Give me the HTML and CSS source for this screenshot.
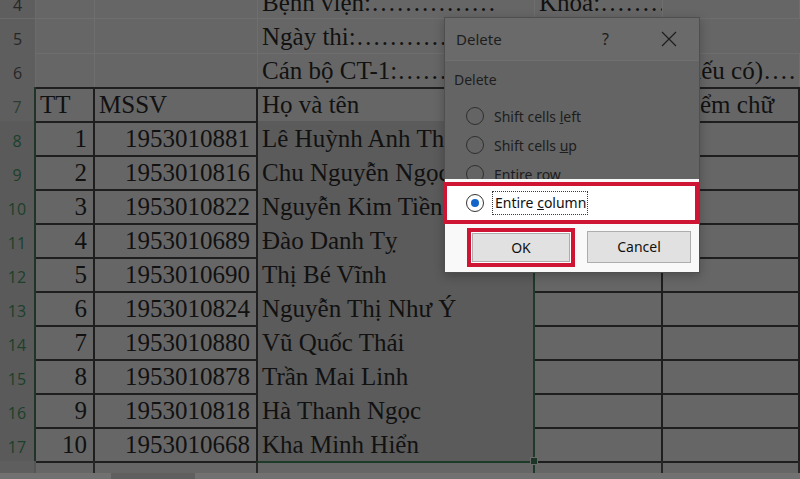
FILE: index.html
```html
<!DOCTYPE html>
<html lang="vi">
<head>
<meta charset="utf-8">
<title>Delete</title>
<link rel="stylesheet" href="styles.css">
</head>
<body>
<div class="sheet">
  <div class="row">
    <div class="rh">4</div><div class="cell"></div><div class="cell"></div>
    <div class="cell clip">Bệnh viện:……………</div><div class="cell clip">Khóa:………</div><div class="cell"></div>
  </div>
  <div class="row">
    <div class="rh">5</div><div class="cell"></div><div class="cell"></div>
    <div class="cell free">Ngày thi:………………………………</div><div class="cell nob"></div><div class="cell nob"></div>
  </div>
  <div class="row r6">
    <div class="rh">6</div><div class="cell"></div><div class="cell"></div>
    <div class="cell clip">Cán bộ CT-1:……………</div><div class="cell free">Cán bộ CT-2: (nếu có)………</div><div class="cell"></div>
  </div>
  <div class="row t">
    <div class="rh top">7</div><div class="cell">TT</div><div class="cell">MSSV</div>
    <div class="cell">Họ và tên</div><div class="cell clip">Điểm số</div><div class="cell ind">Điểm chữ</div>
  </div>
  <div class="row t">
    <div class="rh hl">8</div><div class="cell num">1</div><div class="cell num">1953010881</div>
    <div class="cell sel">Lê Huỳnh Anh Thư</div><div class="cell"></div><div class="cell"></div>
  </div>
  <div class="row t">
    <div class="rh hl">9</div><div class="cell num">2</div><div class="cell num">1953010816</div>
    <div class="cell sel">Chu Nguyễn Ngọc Anh</div><div class="cell"></div><div class="cell"></div>
  </div>
  <div class="row t">
    <div class="rh hl">10</div><div class="cell num">3</div><div class="cell num">1953010822</div>
    <div class="cell sel">Nguyễn Kim Tiền</div><div class="cell"></div><div class="cell"></div>
  </div>
  <div class="row t">
    <div class="rh hl">11</div><div class="cell num">4</div><div class="cell num">1953010689</div>
    <div class="cell sel">Đào Danh Tỵ</div><div class="cell"></div><div class="cell"></div>
  </div>
  <div class="row t">
    <div class="rh hl">12</div><div class="cell num">5</div><div class="cell num">1953010690</div>
    <div class="cell sel">Thị Bé Vĩnh</div><div class="cell"></div><div class="cell"></div>
  </div>
  <div class="row t">
    <div class="rh hl">13</div><div class="cell num">6</div><div class="cell num">1953010824</div>
    <div class="cell sel">Nguyễn Thị Như Ý</div><div class="cell"></div><div class="cell"></div>
  </div>
  <div class="row t">
    <div class="rh hl">14</div><div class="cell num">7</div><div class="cell num">1953010880</div>
    <div class="cell sel">Vũ Quốc Thái</div><div class="cell"></div><div class="cell"></div>
  </div>
  <div class="row t">
    <div class="rh hl">15</div><div class="cell num">8</div><div class="cell num">1953010878</div>
    <div class="cell sel">Trần Mai Linh</div><div class="cell"></div><div class="cell"></div>
  </div>
  <div class="row t">
    <div class="rh hl">16</div><div class="cell num">9</div><div class="cell num">1953010818</div>
    <div class="cell sel">Hà Thanh Ngọc</div><div class="cell"></div><div class="cell"></div>
  </div>
  <div class="row t">
    <div class="rh hl">17</div><div class="cell num">10</div><div class="cell num">1953010668</div>
    <div class="cell sel last">Kha Minh Hiển</div><div class="cell"></div><div class="cell"></div>
  </div>
  <div class="row short">
    <div class="rh"></div><div class="cell"></div><div class="cell"></div>
    <div class="cell selcol"></div><div class="cell"></div><div class="cell"></div>
  </div>
  <div class="tabbar">
    <div class="seg a"></div><div class="seg gap"></div><div class="seg b"></div>
  </div>
</div>

<div class="fill-handle"></div>

<div class="dialog">
  <div class="dlg-title">
    <span class="ttl">Delete</span>
    <span class="help">?</span>
    <svg class="close" width="16" height="16" viewBox="0 0 16 16"><path d="M1 1 L15 15 M15 1 L1 15" stroke="#1e1e1e" stroke-width="1.2" fill="none"/></svg>
  </div>
  <div class="group-label">Delete</div>
  <div class="options">
    <div class="opt"><span class="radio"></span><span>Shift cells <u>l</u>eft</span></div>
    <div class="opt"><span class="radio"></span><span>Shift cells <u>u</u>p</span></div>
    <div class="opt"><span class="radio"></span><span>Entire <u>r</u>ow</span></div>
  </div>
  <div class="bright">
    <div class="hl-box">
      <span class="radio on"><span class="dot"></span></span>
      <span class="focus">Entire <u>c</u>olumn</span>
    </div>
    <div class="btns">
      <div class="ok-box"><div class="btn ok">OK</div></div>
      <div class="btn cancel">Cancel</div>
    </div>
  </div>
</div>
</body>
</html>
```
FILE: styles.css
```css
html, body {
  margin: 0;
  padding: 0;
}
body {
  width: 800px;
  height: 479px;
  overflow: hidden;
  background: #666666;
}
.sheet {
  margin-top: -15px;
}
.row {
  display: grid;
  grid-template-columns: 36px 59px 163px 277px 128px 137px;
  height: 34px;
}
.row.short {
  height: 12px;
}
.rh {
  box-sizing: border-box;
  background: #5e5e5e;
  border-right: 1px solid #6b6b6b;
  border-bottom: 1px solid #6a6a6a;
  font-family: "Open Sans", "Noto Sans", sans-serif;
  font-size: 16px;
  line-height: 30px;
  padding-top: 5px;
  color: #262626;
  text-align: center;
  overflow: hidden;
}
.cell {
  box-sizing: border-box;
  min-width: 0;
  font-family: "Liberation Serif", "Times New Roman", serif;
  font-size: 25px;
  line-height: 32px;
  padding: 2px 4px 0 4px;
  color: #111111;
  white-space: nowrap;
  border-right: 1px solid #6e6e6e;
  border-bottom: 1px solid #6e6e6e;
}
.cell.clip {
  overflow: hidden;
}
.cell.free {
  overflow: visible;
}
.cell.nob {
  border-right-color: transparent;
}
.row:nth-child(2) .cell:nth-child(4),
.row:nth-child(2) .cell:nth-child(5) {
  border-right-color: transparent;
}
.r6 .cell {
  border-bottom: 2px solid #1e1e1e;
}
.r6 .cell:nth-child(5) {
  border-right-color: transparent;
}
.t .rh {
  border-right: 2px solid #22342a;
}
.t .rh.hl {
  background: #5a5a5a;
  color: #1c4029;
}
.t .rh.top {
  color: #2d3d33;
}
.t .cell {
  border-right: 2px solid #1e1e1e;
  border-bottom: 2px solid #1e1e1e;
}
.t .cell.ind {
  padding-left: 12px;
}
.t .cell.num {
  text-align: right;
  padding-right: 6px;
}
.t .cell.sel {
  background: #5b5b5b;
  border-right-color: #1e3a29;
}
.t .cell.sel.last {
  border-bottom-color: #1e3a29;
}
.short .rh {
  border-right: 2px solid #555555;
  border-bottom: none;
}
.short .cell {
  border-right: 2px solid #262626;
  border-bottom: none;
}
.short .cell.selcol {
  border-right-color: #1e3a29;
}
.tabbar {
  display: flex;
  height: 6px;
}
.tabbar .seg.a {
  width: 111px;
  background: #717171;
}
.tabbar .seg.gap {
  width: 84px;
  background: #5f5f5f;
}
.tabbar .seg.b {
  flex: 1;
  background: #717171;
}

.fill-handle {
  position: absolute;
  left: 530px;
  top: 457px;
  width: 6px;
  height: 6px;
  background: #1c3527;
  border: 1px solid #6a6a6a;
}

/* dialog */
.dialog {
  position: absolute;
  left: 444px;
  top: 17px;
  width: 256px;
  height: 256px;
  box-sizing: border-box;
  border: 1px solid #4f4f4f;
  background: #646464;
  box-shadow: 0 3px 10px rgba(0, 0, 0, 0.25);
  font-family: "Noto Sans", "Open Sans", sans-serif;
  color: #1d1d1d;
  display: flex;
  flex-direction: column;
}
.dlg-title {
  height: 42px;
  flex: none;
  background: #6a6a6a;
  border-bottom: 1px solid #6f6f6f;
  display: flex;
  align-items: center;
  padding-left: 11px;
  font-size: 15px;
}
.ttl {
  flex: 1;
}
.help {
  font-size: 16px;
  margin-right: 52px;
}
.close {
  margin-right: 22px;
  display: block;
}
.group-label {
  margin-top: 9px;
  padding-left: 9px;
  font-size: 14px;
  line-height: 20px;
  height: 20px;
}
.options {
  margin-top: 10px;
  height: 79px;
  overflow: hidden;
  padding-top: 7px;
  box-sizing: border-box;
  display: flex;
  flex-direction: column;
  gap: 11px;
  font-size: 14px;
}
.opt {
  display: flex;
  align-items: center;
  height: 18px;
  padding-left: 21px;
  flex: none;
}
.radio {
  width: 18px;
  height: 18px;
  box-sizing: border-box;
  border: 1px solid #2f2f2f;
  border-radius: 50%;
  margin-right: 10px;
  flex: none;
  display: flex;
  align-items: center;
  justify-content: center;
}
.bright {
  flex: 1;
  background: #f9f9f9;
  padding-top: 3px;
  color: #111111;
  font-size: 14px;
}
.hl-box {
  height: 42px;
  box-sizing: border-box;
  border: 4px solid #cf1534;
  margin-left: -2px;
  display: flex;
  align-items: center;
  padding-left: 19px;
  background: #ffffff;
}
.radio.on {
  border-color: #333333;
  margin-right: 8px;
}
.dot {
  width: 8px;
  height: 8px;
  border-radius: 50%;
  background: #1565c8;
}
.focus {
  border: 1px dotted #3c3c3c;
  height: 24px;
  line-height: 22px;
  box-sizing: border-box;
  padding: 0 1px 0 2px;
}
.btns {
  display: flex;
  align-items: center;
  gap: 12px;
  padding-left: 22px;
  margin-top: 4px;
}
.ok-box {
  width: 108px;
  height: 39px;
  box-sizing: border-box;
  border: 4px solid #cf1534;
  padding: 1px;
  background: #ffffff;
  display: flex;
}
.btn {
  box-sizing: border-box;
  background: #e1e1e1;
  border: 1px solid #adadad;
  display: flex;
  align-items: center;
  justify-content: center;
  font-size: 14px;
}
.btn.ok {
  flex: 1;
}
.btn.cancel {
  width: 104px;
  height: 32px;
  margin-top: -2px;
}
```
